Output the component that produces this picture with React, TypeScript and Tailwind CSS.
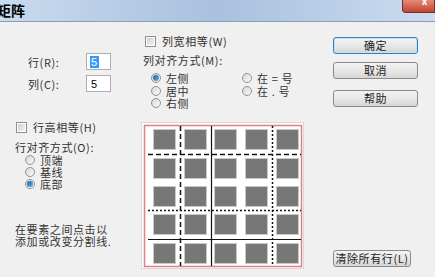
import React from 'react';

const cols = [12, 43, 73, 104, 135];
const rows = [7, 36, 64, 92, 121];

function Checkbox() {
  return (
    <span className="w-[11px] h-[11px] border border-[#8e8f8f] bg-white p-px shrink-0">
      <span className="block w-full h-full bg-gradient-to-br from-[#cfcfcf] to-[#f4f4f4]" />
    </span>
  );
}

function Radio({ on = false }: { on?: boolean }) {
  return (
    <span className="w-[10px] h-[10px] rounded-full border border-[#929292] bg-gradient-to-br from-[#d6d6d6] to-[#fbfbfb] flex items-center justify-center shrink-0">
      {on && <span className="w-[6px] h-[6px] rounded-full bg-gradient-to-br from-[#1a5fa6] to-[#5fb2ee]" />}
    </span>
  );
}

function Btn({ label, primary = false, w = 'w-[85px]' }: { label: string; primary?: boolean; w?: string }) {
  return (
    <div
      className={`${w} h-[17px] rounded-[3px] border flex items-center justify-center text-[11px] leading-[11px] text-[#222] bg-gradient-to-b from-[#f3f3f3] via-[#e8e8e8] to-[#d6d6d6] ${
        primary ? 'border-[#3c7fb1] shadow-[inset_0_0_0_1px_#bfe3f8]' : 'border-[#8a8a8a]'
      }`}
    >
      {label}
    </div>
  );
}

function Preview() {
  return (
    <div className="w-[163px] h-[147px] bg-white border border-[#dadada]">
      <svg width="161" height="145" viewBox="1 1 161 145">
        <rect x="3.5" y="3.5" width="157" height="141" fill="#fff" stroke="#e27e88" strokeWidth="1.5" />
        {rows.map((y) =>
          cols.map((x) => (
            <rect key={`${x}-${y}`} x={x + 0.5} y={y + 0.5} width="22" height="20" fill="#777" stroke="#c9c9c9" strokeWidth="1" />
          ))
        )}
        {/* column dividers */}
        <line x1="39.5" y1="4" x2="39.5" y2="144" stroke="#111" strokeWidth="1.5" strokeDasharray="5 3" />
        <line x1="70.5" y1="4" x2="70.5" y2="144" stroke="#111" strokeWidth="1.2" />
        <line x1="131.5" y1="4" x2="131.5" y2="144" stroke="#111" strokeWidth="1.5" strokeDasharray="2 2" />
        {/* row dividers */}
        <line x1="7" y1="32.5" x2="160" y2="32.5" stroke="#111" strokeWidth="1.5" strokeDasharray="5 3" />
        <line x1="7" y1="88.5" x2="160" y2="88.5" stroke="#111" strokeWidth="1.5" strokeDasharray="2 2" />
        <line x1="7" y1="117.5" x2="160" y2="117.5" stroke="#111" strokeWidth="1.2" />
      </svg>
    </div>
  );
}

export default function App() {
  return (
    <div className="w-[435px] h-[277px] overflow-hidden bg-[#f0f0f0] font-['Noto_Sans_CJK_SC',sans-serif] text-[11px] leading-[12px] tracking-[0.6px] text-[#333]">
      {/* title bar */}
      <div className="h-[22px] flex items-start bg-gradient-to-r from-[#c8dbef] via-[#a9c1de] to-[#cadcf0] border-b border-[#8d9cae]">
        <span className="ml-[-3px] mt-[3px] text-[14px] leading-[15px] tracking-normal font-bold text-black">矩阵</span>
        <div className="ml-auto w-[33px] h-[13px] rounded-bl-[4px] border border-t-0 border-[#7a2f2a] bg-gradient-to-b from-[#e48a78] to-[#c2432f] flex justify-end overflow-hidden">
          <span className="mr-[6px] mt-[-4px] text-white text-[10px] leading-[10px] font-bold">x</span>
        </div>
      </div>

      <div className="flex h-[255px]">
        {/* left column */}
        <div className="w-[141px] flex flex-col">
          <div className="mt-[31px] flex items-center h-[17px]">
            <span className="ml-[28px] w-[58px]">行(R):</span>
            <div className="w-[25px] h-[17px] bg-white border border-[#abadb3] flex items-center pl-[3px]">
              <span className="bg-[#3399ff] text-white font-['Liberation_Sans',sans-serif] leading-[12px] px-px">5</span>
            </div>
          </div>
          <div className="mt-[5px] flex items-center h-[17px]">
            <span className="ml-[28px] w-[58px]">列(C):</span>
            <div className="w-[25px] h-[17px] bg-white border border-[#abadb3] flex items-center pl-[4px]">
              <span className="font-['Liberation_Sans',sans-serif] leading-[12px] text-black">5</span>
            </div>
          </div>
          <div className="mt-[29px] flex items-center gap-[6px] ml-[16px] h-[12px]">
            <Checkbox />
            <span>行高相等(H)</span>
          </div>
          <div className="mt-[8px] ml-[15px] h-[12px]">行对齐方式(O):</div>
          <div className="ml-[25px] mt-px flex flex-col">
            {['顶端', '基线', '底部'].map((t, i) => (
              <div key={t} className="h-[12px] flex items-center gap-[5px]">
                <Radio on={i === 2} />
                <span>{t}</span>
              </div>
            ))}
          </div>
          <div className="mt-[33px] ml-[15px] flex flex-col">
            <span className="h-[12px]">在要素之间点击以</span>
            <span className="h-[12px]">添加或改变分割线.</span>
          </div>
        </div>

        {/* middle column */}
        <div className="w-[163px] flex flex-col">
          <div className="mt-[13px] ml-[4px] flex items-center gap-[6px] h-[12px]">
            <Checkbox />
            <span>列宽相等(W)</span>
          </div>
          <div className="mt-[7px] ml-[2px] h-[12px]">列对齐方式(M):</div>
          <div className="mt-[6px] ml-[10px] grid grid-cols-[91px_1fr] auto-rows-[12.5px]">
            <div className="flex items-center gap-[5px]"><Radio on /><span>左侧</span></div>
            <div className="flex items-center gap-[5px]"><Radio /><span>在 = 号</span></div>
            <div className="flex items-center gap-[5px]"><Radio /><span>居中</span></div>
            <div className="flex items-center gap-[5px]"><Radio /><span>在 . 号</span></div>
            <div className="flex items-center gap-[5px]"><Radio /><span>右侧</span></div>
          </div>
          <div className="mt-[12px]">
            <Preview />
          </div>
        </div>

        {/* right column */}
        <div className="flex-1 pl-[29px] flex flex-col">
          <div className="mt-[15px]"><Btn label="确定" primary /></div>
          <div className="mt-[8px]"><Btn label="取消" /></div>
          <div className="mt-[11px]"><Btn label="帮助" /></div>
          <div className="mt-auto mb-[10px]"><Btn label="清除所有行(L)" w="w-[78px]" /></div>
        </div>
      </div>
    </div>
  );
}
